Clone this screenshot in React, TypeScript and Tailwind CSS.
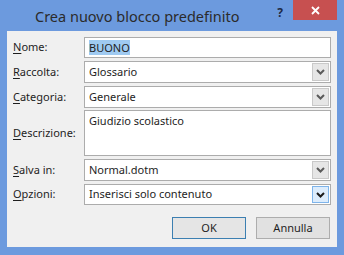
import React from 'react';

const FONT = "font-['Noto_Sans',sans-serif]";

function Chevron({ dark }: { dark?: boolean }) {
  return (
    <svg width="9" height="6" viewBox="0 0 9 6" fill="none">
      <path d="M1 1l3.5 3.5L8 1" stroke={dark ? '#1a1a1a' : '#5a5a5a'} strokeWidth="2" />
    </svg>
  );
}

function Label({ first, rest }: { first: string; rest: string }) {
  return (
    <span className="w-[71px] shrink-0 text-[11px] text-[#1e1e1e]">
      <span className="underline underline-offset-2">{first}</span>
      {rest}
    </span>
  );
}

function Select({ value, focused }: { value: string; focused?: boolean }) {
  return (
    <div className="flex h-full flex-1 items-center border border-[#acacac] bg-white">
      <span className="flex-1 pl-[4px] text-[11px] text-[#1e1e1e]">{value}</span>
      <div
        className={`mr-px flex h-[calc(100%-2px)] w-[17px] items-center justify-center border ${
          focused ? 'border-[#7eb4ea] bg-[#dcecfc]' : 'border-[#c9c9c9] bg-[#e6e6e6]'
        }`}
      >
        <Chevron dark={focused} />
      </div>
    </div>
  );
}

export default function App() {
  return (
    <div className={`flex h-[255px] w-[344px] flex-col bg-[#6c9ade] ${FONT}`}>
      {/* Title bar */}
      <div className="flex h-[31px] shrink-0 items-start">
        <span className="pl-[35px] pt-[6px] text-[14.5px] text-[#2b2b2b]">Crea nuovo blocco predefinito</span>
        <span className="ml-auto mr-[10px] pt-[4px] text-[12px] font-bold text-[#1f2a44]">?</span>
        <div className="mr-[7px] flex h-[20px] w-[44px] items-center justify-center bg-[#c75050]">
          <svg width="9" height="9" viewBox="0 0 9 9">
            <path d="M1 1l7 7M8 1l-7 7" stroke="#fff" strokeWidth="1.8" />
          </svg>
        </div>
      </div>

      {/* Body */}
      <div className="mx-[7px] mb-[8px] flex flex-1 flex-col bg-[#f0f0f0] pl-[6px] pr-[6px] pt-[6px]">
        <div className="flex h-[21px] items-center">
          <Label first="N" rest="ome:" />
          <div className="flex h-full flex-1 items-center border border-[#acacac] bg-white pl-[4px]">
            <span className="bg-[#9fcaf1] text-[11px] leading-[15px] text-[#1e1e1e]">BUONO</span>
          </div>
        </div>
        <div className="mt-[3px] flex h-[22px] items-center">
          <Label first="R" rest="accolta:" />
          <Select value="Glossario" />
        </div>
        <div className="mt-[3px] flex h-[22px] items-center">
          <Label first="C" rest="ategoria:" />
          <Select value="Generale" />
        </div>
        <div className="mt-[2px] flex h-[46px] items-center">
          <Label first="D" rest="escrizione:" />
          <div className="h-full flex-1 border border-[#acacac] bg-white pl-[4px] pt-[2px] text-[11px] text-[#1e1e1e]">
            Giudizio scolastico
          </div>
        </div>
        <div className="mt-[3px] flex h-[22px] items-center">
          <Label first="S" rest="alva in:" />
          <Select value="Normal.dotm" />
        </div>
        <div className="mt-[3px] flex h-[21px] items-center">
          <Label first="O" rest="pzioni:" />
          <Select value="Inserisci solo contenuto" focused />
        </div>

        <div className="mt-[12px] flex justify-end gap-[10px] pr-px">
          <button className="h-[22px] w-[74px] border border-[#3c7fb1] bg-[#e5e5e5] text-[11px] text-[#1e1e1e]">
            OK
          </button>
          <button className="h-[22px] w-[74px] border border-[#adadad] bg-[#e1e1e1] text-[11px] text-[#1e1e1e]">
            Annulla
          </button>
        </div>
      </div>
    </div>
  );
}
